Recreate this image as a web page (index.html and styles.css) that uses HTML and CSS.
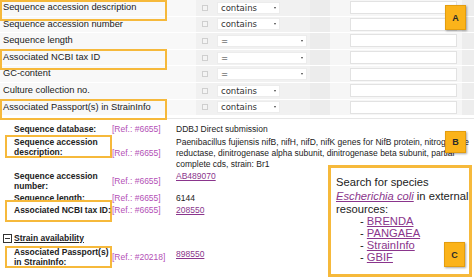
FILE: index.html
```html
<!DOCTYPE html>
<html lang="en">
<head>
    <meta charset="UTF-8">
    <meta name="viewport" content="width=device-width, initial-scale=1.0">
    <title>Strain search fields</title>
<link rel="stylesheet" href="styles.css">
</head>
<body>
<div class="page">
    <section class="search">
        <table class="search-table">
            <colgroup>
                <col class="c-field"><col class="c-cb"><col class="c-op"><col class="c-sp"><col class="c-val"><col class="c-end">
            </colgroup>
            <tr>
                <td class="field"><span class="mark is-hl">Sequence accession description</span></td>
                <td class="cb"><span class="check"></span></td>
                <td class="op"><span class="sel sel-short">contains<i class="arrow"></i></span></td>
                <td class="sp"></td>
                <td class="val"><span class="input"></span></td>
                <td class="end"></td>
            </tr>
            <tr>
                <td class="field"><span class="mark">Sequence accession number</span></td>
                <td class="cb"><span class="check"></span></td>
                <td class="op"><span class="sel sel-short">contains<i class="arrow"></i></span></td>
                <td class="sp"></td>
                <td class="val"><span class="input"></span></td>
                <td class="end"></td>
            </tr>
            <tr>
                <td class="field"><span class="mark">Sequence length</span></td>
                <td class="cb"><span class="check"></span></td>
                <td class="op"><span class="sel sel-long">=<i class="arrow"></i></span></td>
                <td class="sp"></td>
                <td class="val"><span class="input"></span></td>
                <td class="end"></td>
            </tr>
            <tr>
                <td class="field"><span class="mark is-hl">Associated NCBI tax ID</span></td>
                <td class="cb"><span class="check"></span></td>
                <td class="op"><span class="sel sel-long">=<i class="arrow"></i></span></td>
                <td class="sp"></td>
                <td class="val"><span class="input"></span></td>
                <td class="end"></td>
            </tr>
            <tr>
                <td class="field"><span class="mark">GC-content</span></td>
                <td class="cb"><span class="check"></span></td>
                <td class="op"><span class="sel sel-long">=<i class="arrow"></i></span></td>
                <td class="sp"></td>
                <td class="val"><span class="input"></span></td>
                <td class="end"></td>
            </tr>
            <tr>
                <td class="field"><span class="mark">Culture collection no.</span></td>
                <td class="cb"><span class="check"></span></td>
                <td class="op"><span class="sel sel-short">contains<i class="arrow"></i></span></td>
                <td class="sp"></td>
                <td class="val"><span class="input"></span></td>
                <td class="end"></td>
            </tr>
            <tr>
                <td class="field"><span class="mark is-hl">Associated Passport(s) in StrainInfo</span></td>
                <td class="cb"><span class="check"></span></td>
                <td class="op"><span class="sel sel-short">contains<i class="arrow"></i></span></td>
                <td class="sp"></td>
                <td class="val"><span class="input"></span></td>
                <td class="end"></td>
            </tr>
        </table>
    </section>

    <section class="details">
        <div class="lbl">Sequence database:</div>
        <div class="ref">[Ref.: #6655]</div>
        <div class="value wide">DDBJ Direct submission</div>

        <div class="lbl hl hl-tight">Sequence accession<br>description:</div>
        <div class="ref">[Ref.: #6655]</div>
        <div class="value wide">Paenibacillus fujiensis nifB, nifH, nifD, nifK genes for NifB protein, nitrogenase<br>reductase, dinitrogenase alpha subunit, dinitrogenase beta subunit, partial<br>complete cds, strain: Br1</div>

        <div class="lbl">Sequence accession<br>number:</div>
        <div class="ref">[Ref.: #6655]</div>
        <div class="value"><a href="#">AB489070</a></div>

        <aside class="resources">
            <p>Search for species<br><a href="#"><em>Escherichia coli</em></a> in external<br>resources:</p>
            <ul>
                <li>- <a href="#">BRENDA</a></li>
                <li>- <a href="#">PANGAEA</a></li>
                <li>- <a href="#">StrainInfo</a></li>
                <li>- <a href="#">GBIF</a></li>
            </ul>
        </aside>

        <div class="lbl">Sequence length:</div>
        <div class="ref">[Ref.: #6655]</div>
        <div class="value">6144</div>

        <div class="lbl hl hl-loose">Associated NCBI tax ID:</div>
        <div class="ref">[Ref.: #6655]</div>
        <div class="value"><a href="#">208550</a></div>

        <div class="group"><span class="toggle"></span><span class="group-name">Strain availability</span></div>

        <div class="lbl hl hl-pass">Associated Passport(s)<br>in StrainInfo:</div>
        <div class="ref">[Ref.: #20218]</div>
        <div class="value value-low"><a href="#">898550</a></div>
    </section>

    <span class="badge badge-a">A</span>
    <span class="badge badge-b">B</span>
    <span class="badge badge-c">C</span>
</div>
</body>
</html>
```

FILE: styles.css
```css
:root {
    --hl-color: #f6b93b;
    --badge-color: #fbb31a;
    --ref-color: #b350b6;
    --link-color: #8a358c;
    --text-color: #222;
}

* {
    margin: 0;
    padding: 0;
    box-sizing: border-box;
}

body {
    background-color: #fff;
    color: var(--text-color);
    font-family: "Liberation Sans", Arial, sans-serif;
}

.page {
    position: relative;
    width: 474px;
    height: 279px;
    overflow: hidden;
}

/* --- search form --- */
.search { padding-bottom: 2px; }

.search-table {
    width: 474px;
    table-layout: fixed;
    border-collapse: separate;
    border-spacing: 0;
}
.c-field { width: 196px; }
.c-cb { width: 16px; }
.c-op { width: 98px; }
.c-sp { width: 20px; }
.c-val { width: 132px; }
.c-end { width: 12px; }

.search-table tr { height: 16.6px; }
.search-table td {
    padding: 0;
    border-bottom: 1px solid #fff;
    vertical-align: middle;
}
.field { background-color: #f8f8f8; }
.cb, .op { background-color: #f1f1f1; }
.sp { background-color: #ececec; }
.val { background-color: #f6f6f6; }
.end { background-color: #ededed; }

.mark {
    position: relative;
    display: block;
    padding-left: 3px;
    font-size: 9.3px;
    line-height: 15.6px;
    white-space: nowrap;
}
.mark.is-hl::after {
    content: '';
    position: absolute;
    left: 0;
    top: -0.5px;
    width: 163px;
    height: 17px;
    border: 2px solid var(--hl-color);
}

.check {
    display: block;
    width: 6px;
    height: 6px;
    margin-left: 6px;
    border: 1px solid #cfcfcf;
    background-color: #f4f4f4;
}

.sel {
    position: relative;
    display: block;
    height: 12px;
    margin-left: 5px;
    padding-left: 3px;
    background-color: #fff;
    border: 1px solid #ececec;
    font-family: "DejaVu Sans", Verdana, sans-serif;
    font-size: 8.5px;
    line-height: 10px;
    color: #333;
}
.sel-short { width: 63px; }
.sel-long { width: 90px; }
.arrow {
    position: absolute;
    right: 3px;
    top: 4px;
    border-left: 1.5px solid transparent;
    border-right: 1.5px solid transparent;
    border-top: 2.5px solid #444;
}

.input {
    display: block;
    width: 107px;
    height: 13px;
    margin-left: 20px;
    background-color: #fff;
    border: 1px solid #e2e2e2;
}

/* --- strain details --- */
.details {
    display: grid;
    grid-template-columns: 103px 66px 152px 1fr;
    row-gap: 1.5px;
    align-items: start;
    padding: 5px 0 0 7px;
    border-top: 1px solid #e6e6e6;
    font-size: 8.5px;
}

.lbl {
    grid-column: 1;
    padding-left: 7px;
    font-weight: bold;
    line-height: 10px;
    white-space: nowrap;
}
.lbl:not(:has(br)) { line-height: 11px; }

.hl { position: relative; z-index: 0; }
.hl::after {
    content: '';
    position: absolute;
    z-index: -1;
    left: -2px;
    right: -2px;
    top: -1.5px;
    bottom: -1.5px;
    background-color: #fff;
    border: 2px solid var(--hl-color);
}
.hl-loose::after { top: -5px; bottom: -6px; }
.hl-pass::after { top: -1.5px; bottom: -0.5px; }

.ref {
    align-self: center;
    padding-left: 2px;
    color: var(--ref-color);
    line-height: 11px;
    white-space: nowrap;
}

.value {
    line-height: 11px;
    white-space: nowrap;
}
.value.wide { grid-column: 3 / 5; }
.value-low { padding-top: 2px; }

.details a { color: var(--link-color); }

.group {
    grid-column: 1 / 4;
    display: flex;
    align-items: center;
    gap: 2px;
    margin: 15px 0 2px -4px;
    font-weight: bold;
    line-height: 11px;
}
.group-name { text-decoration: underline; }
.toggle {
    position: relative;
    width: 9px;
    height: 9px;
    border: 1px solid #333;
}
.toggle::after {
    content: '';
    position: absolute;
    left: 1px;
    right: 1px;
    top: 3px;
    height: 1px;
    background-color: #333;
}

.resources {
    grid-column: 4;
    grid-row: 3 / 8;
    height: 112px;
    margin: -6px 2px -12px 0;
    padding: 8px 0 0 5px;
    background-color: #fff;
    border: 3px solid var(--hl-color);
    font-size: 11.2px;
    line-height: 13.5px;
    white-space: nowrap;
    overflow: hidden;
}
.resources ul {
    list-style: none;
    margin-top: -2px;
    padding-left: 24px;
    line-height: 12px;
}

/* --- annotation badges --- */
.badge {
    position: absolute;
    display: flex;
    align-items: center;
    justify-content: center;
    width: 21px;
    background-color: var(--badge-color);
    border: 1px solid #e39d0f;
    box-shadow: 1px 1px 2px rgba(0, 0, 0, 0.35);
    font-size: 9px;
    font-weight: bold;
    color: #2a2a2a;
}
.badge-a { left: 445px; top: 5px; height: 25px; }
.badge-b { left: 445px; top: 131px; height: 22px; }
.badge-c { left: 444px; top: 242px; height: 25px; }
```
